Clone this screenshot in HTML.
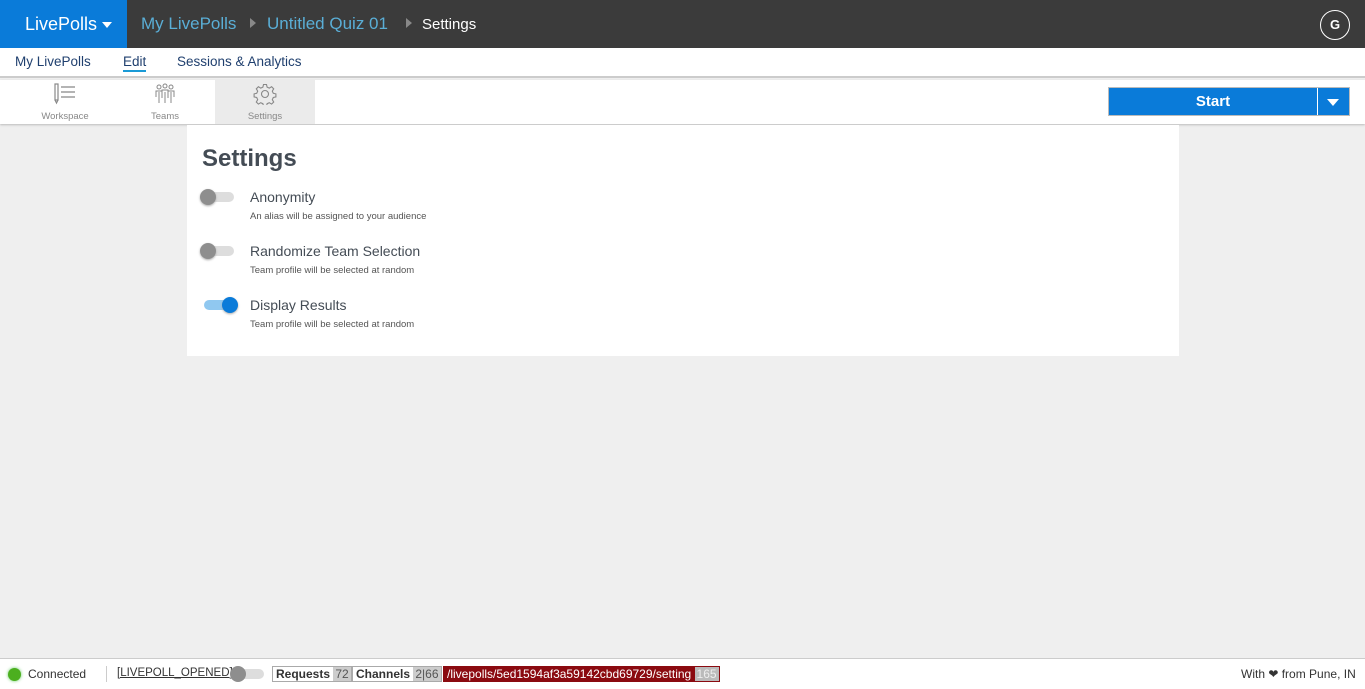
<!DOCTYPE html>
<html><head><meta charset="utf-8"><style>
*{box-sizing:border-box;margin:0;padding:0}
body{width:1365px;height:689px;overflow:hidden;background:#efefef;font-family:"Liberation Sans",sans-serif;position:relative}
.top{position:absolute;left:0;top:0;width:1365px;height:48px;background:#3b3b3b}
.brand{position:absolute;left:0;top:0;width:127px;height:48px;background:#0a7bd9;color:#fff;font-size:18px;line-height:48px;padding-left:25px}
.crumb{position:absolute;top:14px;font-size:17px;color:#5aaed6}
.arr{position:absolute;top:18px;width:0;height:0;border-top:5px solid transparent;border-bottom:5px solid transparent;border-left:6px solid #888}
.av{position:absolute;left:1320px;top:10px;width:30px;height:30px;border:1px solid #fff;border-radius:50%;color:#fff;font-size:13px;font-weight:bold;text-align:center;line-height:28px}
.nav{position:absolute;top:48px;left:0;width:1365px;height:30px;background:#fff;border-bottom:2px solid #ccc}
.nav span{position:absolute;top:6px;font-size:13.5px;color:#1f3f6e}
.tb{position:absolute;top:80px;left:0;width:1365px;height:44px;background:#fff;box-shadow:0 1px 2px #bbb}
.tab{position:absolute;top:0;width:100px;height:44px;text-align:center;font-size:9.5px;color:#888}
.tab svg{display:block;margin:3px auto 6px}
.start{position:absolute;left:1108px;top:87px;width:242px;height:29px;background:#0a7bd9;border:1px solid #bbb}
.start b{position:absolute;left:0;width:208px;text-align:center;color:#fff;font-size:15px;line-height:27px;font-weight:bold}
.start i{position:absolute;left:208px;top:0;width:1px;height:27px;background:#fff}
.card{position:absolute;left:187px;top:125px;width:992px;height:231px;background:#fff}
h1{position:absolute;left:15px;top:20px;font-size:24px;color:#444c55;font-weight:bold}
.tr{position:absolute;left:15px;width:32px;height:10px;border-radius:5px;background:#ddd}
.tr::after{content:"";position:absolute;left:-2px;top:-3px;width:16px;height:16px;border-radius:50%;background:#8e8e8e;box-shadow:0 1px 2px #aaa}
.tr.on{background:#90c8f0;left:17px}
.tr.on::after{left:18px;background:#0a7bd9}
.t1{position:absolute;left:63px;font-size:14px;color:#444c55;white-space:nowrap}
.t2{position:absolute;left:63px;font-size:9.5px;color:#555;white-space:nowrap}
.foot{position:absolute;top:658px;left:0;width:1365px;height:31px;background:#fff;border-top:1px solid #ccc;font-size:12px;color:#333}
.foot>span{position:absolute;top:8px;white-space:nowrap}
.foot>.box{border:1px solid #aaa;height:16px;top:7px;line-height:14px;padding-left:3px;font-weight:bold;font-size:12px}
.num{display:inline-block;background:#ccc;color:#555;font-weight:normal;padding:0 2px;height:14px;vertical-align:top}
</style></head><body>
<div class="top">
<div class="brand">LivePolls <span style="display:inline-block;border-left:5px solid transparent;border-right:5px solid transparent;border-top:6px solid #fff;vertical-align:middle"></span></div>
<span class="crumb" style="left:141px">My LivePolls</span>
<div class="arr" style="left:250px"></div>
<span class="crumb" style="left:267px">Untitled Quiz 01</span>
<div class="arr" style="left:406px"></div>
<span class="crumb" style="left:422px;color:#fff;font-size:15px;top:16px">Settings</span>
<div class="av">G</div>
</div>
<div class="nav">
<span style="left:15px">My LivePolls</span>
<span style="left:123px;border-bottom:2px solid #1a9ad6;padding-bottom:1px">Edit</span>
<span style="left:177px">Sessions &amp; Analytics</span>
</div>
<div class="tb">
<div class="tab" style="left:15px"><svg width="24" height="22" viewBox="0 0 24 22" fill="none" stroke="#888" stroke-width="1.2"><rect x="2" y="1" width="3" height="16"/><path d="M2 17l1.5 3 1.5-3M8 4h14M8 9h14M8 14h14"/></svg>Workspace</div>
<div class="tab" style="left:115px"><svg width="24" height="22" viewBox="0 0 24 22" fill="none" stroke="#888" stroke-width="1"><circle cx="6" cy="4" r="2"/><circle cx="12" cy="3" r="2"/><circle cx="18" cy="4" r="2"/><path d="M3 14V8h6v6M9 15V7h6v8M15 14V8h6v6M6 9v11M12 9v11M18 9v11"/></svg>Teams</div>
<div class="tab" style="left:215px;background:#ebebeb"><svg width="24" height="22" viewBox="0 0 24 22" fill="none" stroke="#888" stroke-width="1.1"><circle cx="12" cy="11" r="3.5"/><path d="M10.5 1.5h3l.6 2.6 2.2 1 2.3-1.4 2.1 2.1-1.4 2.3 1 2.2 2.6.6v3l-2.6.6-1 2.2 1.4 2.3-2.1 2.1-2.3-1.4-2.2 1-.6 2.6h-3l-.6-2.6-2.2-1-2.3 1.4-2.1-2.1 1.4-2.3-1-2.2-2.6-.6v-3l2.6-.6 1-2.2-1.4-2.3 2.1-2.1 2.3 1.4 2.2-1z"/></svg>Settings</div>
</div>
<div class="start"><b>Start</b><i></i><span style="position:absolute;left:218px;top:11px;border-left:6px solid transparent;border-right:6px solid transparent;border-top:7px solid #fff"></span></div>
<div class="card">
<h1>Settings</h1>
<div class="tr" style="top:67px"></div><span class="t1" style="top:64px">Anonymity</span><span class="t2" style="top:86px">An alias will be assigned to your audience</span>
<div class="tr" style="top:121px"></div><span class="t1" style="top:118px">Randomize Team Selection</span><span class="t2" style="top:140px">Team profile will be selected at random</span>
<div class="tr on" style="top:175px"></div><span class="t1" style="top:172px">Display Results</span><span class="t2" style="top:194px">Team profile will be selected at random</span>
</div>
<div class="foot">
<span style="left:8px;top:9px;width:13px;height:13px;border-radius:50%;background:#4caf1f;box-shadow:0 0 3px #6c6"></span>
<span style="left:28px">Connected</span>
<span style="left:106px;top:7px;width:1px;height:16px;background:#ccc"></span>
<span style="left:117px;text-decoration:underline;font-size:11.5px">[LIVEPOLL_OPENED]</span>
<span style="left:231px;top:10px;width:33px;height:10px;border-radius:5px;background:#ddd"></span>
<span style="left:230px;top:7px;width:16px;height:16px;border-radius:50%;background:#8e8e8e"></span>
<span class="box" style="left:272px">Requests <span class="num">72</span></span>
<span class="box" style="left:352px">Channels <span class="num">2|66</span></span>
<span class="box" style="left:443px;background:#8b0a10;color:#fff;border-color:#8b0a10;font-weight:normal;font-size:12px">/livepolls/5ed1594af3a59142cbd69729/setting <span class="num" style="background:#bbb;color:#eee">165</span></span>
<span style="left:1241px">With &#10084; from Pune, IN</span>
</div>
</body></html>
